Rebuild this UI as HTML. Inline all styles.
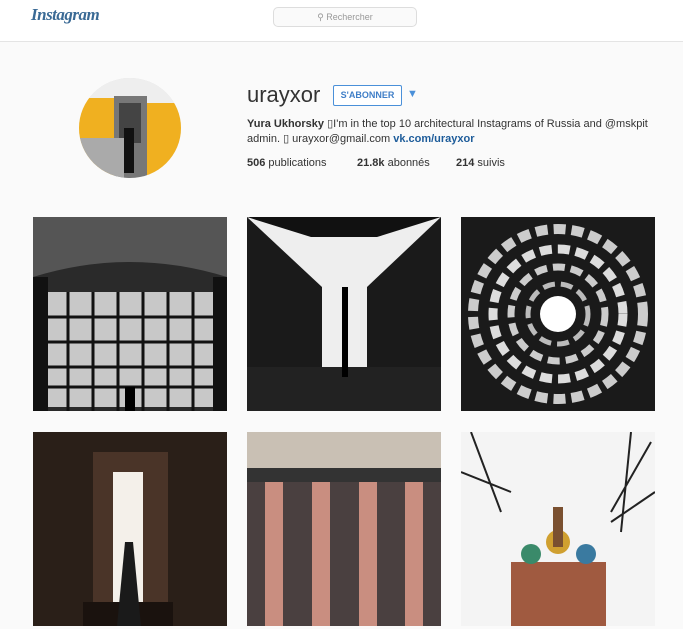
<!DOCTYPE html>
<html><head><meta charset="utf-8"><style>
body{margin:0;width:683px;height:629px;overflow:hidden;background:#fafafa;font-family:"Liberation Sans",sans-serif;position:relative}
.hdr{position:absolute;left:0;top:0;width:683px;height:41px;background:#fff;border-bottom:1px solid #e4e4e4}
.logo{position:absolute;left:31px;top:5px;font-family:"Liberation Serif",serif;font-style:italic;font-weight:bold;font-size:17px;color:#3a6a95;letter-spacing:-0.5px}
.search{position:absolute;left:273px;top:7px;width:142px;height:18px;border:1px solid #ddd;border-radius:5px;background:#fafafa;font-size:9px;color:#999;text-align:center;line-height:18px}
.av{position:absolute;left:79px;top:78px;width:102px;height:100px;border-radius:50%;overflow:hidden;background:#ddd}
.name{position:absolute;left:247px;top:82px;font-size:22px;color:#333;font-weight:300}
.btn{position:absolute;left:333px;top:85px;width:67px;height:19px;border:1px solid #4a90d9;border-radius:2px;font-size:9px;color:#3f7ec7;font-weight:bold;text-align:center;line-height:19px;background:#fff}
.arr{position:absolute;left:407px;top:88px;font-size:11px;color:#4a90d9}
.bio{position:absolute;left:247px;top:117px;font-size:11px;color:#333;line-height:15px;width:420px}
.bio b{color:#333}.bio a{color:#1d5c9a;font-weight:bold;text-decoration:none}
.stats{position:absolute;top:157px;font-size:11px;color:#333}
.ph{position:absolute;width:194px;height:194px;overflow:hidden}
</style></head><body>
<div class="hdr"><div class="logo">Instagram</div><div class="search">&#9906; Rechercher</div></div>
<div class="av"><svg width="102" height="100"><rect width="102" height="100" fill="#eee"/><rect x="0" y="20" width="35" height="80" fill="#f0b020"/><rect x="68" y="25" width="34" height="75" fill="#f0b020"/><rect x="35" y="18" width="33" height="82" fill="#777"/><rect x="40" y="25" width="22" height="40" fill="#444"/><rect x="0" y="60" width="45" height="40" fill="#aaa"/><rect x="45" y="50" width="10" height="45" fill="#111"/></svg></div>
<div class="name">urayxor</div><div class="btn">S'ABONNER</div><div class="arr">▼</div>
<div class="bio"><b>Yura Ukhorsky</b> ▯I'm in the top 10 architectural Instagrams of Russia and @mskpit admin. ▯ urayxor@gmail.com <a>vk.com/urayxor</a></div>
<div class="stats" style="left:247px"><b>506</b> publications</div>
<div class="stats" style="left:357px"><b>21.8k</b> abonnés</div>
<div class="stats" style="left:456px"><b>214</b> suivis</div>

<div class="ph" style="left:33px;top:217px"><svg width="194" height="194"><rect width="194" height="194" fill="#2a2a2a"/><path d="M0 0H194V60Q97 30 0 60Z" fill="#555"/><rect x="15" y="75" width="165" height="115" fill="#c8c8c8"/><g stroke="#111" stroke-width="3"><path d="M15 100H180M15 125H180M15 150H180M15 170H180M35 75V194M60 75V194M85 75V194M110 75V194M135 75V194M160 75V194"/></g><rect x="0" y="60" width="15" height="134" fill="#111"/><rect x="180" y="60" width="14" height="134" fill="#111"/><rect x="92" y="170" width="10" height="24" fill="#000"/></svg></div>
<div class="ph" style="left:247px;top:217px"><svg width="194" height="194"><rect width="194" height="194" fill="#eee"/><path d="M0 0L75 70V194H0Z" fill="#1a1a1a"/><path d="M194 0L120 70V194H194Z" fill="#1a1a1a"/><path d="M0 0H194L130 20H64Z" fill="#111"/><rect x="0" y="150" width="194" height="44" fill="#222"/><rect x="95" y="70" width="6" height="90" fill="#000"/></svg></div>
<div class="ph" style="left:461px;top:217px"><svg width="194" height="194"><rect width="194" height="194" fill="#1a1a1a"/><g fill="none" stroke-dasharray="12 6"><circle cx="97" cy="97" r="85" stroke="#ccc" stroke-width="10"/><circle cx="97" cy="97" r="65" stroke="#ddd" stroke-width="9"/><circle cx="97" cy="97" r="47" stroke="#ccc" stroke-width="7"/><circle cx="97" cy="97" r="30" stroke="#bbb" stroke-width="5"/></g><circle cx="97" cy="97" r="18" fill="#fff"/></svg></div>
<div class="ph" style="left:33px;top:432px"><svg width="194" height="194"><rect width="194" height="194" fill="#2a1f18"/><rect x="60" y="20" width="75" height="174" fill="#4a3428"/><rect x="80" y="40" width="30" height="130" fill="#f4f0ea"/><rect x="50" y="170" width="90" height="24" fill="#1a120e"/><path d="M92 110L100 110L108 194H84Z" fill="#1a1a1a"/></svg></div>
<div class="ph" style="left:247px;top:432px"><svg width="194" height="194"><rect width="194" height="194" fill="#4a4040"/><rect width="194" height="40" fill="#c9c0b4"/><g fill="#c98e80"><rect x="18" y="48" width="18" height="146"/><rect x="65" y="48" width="18" height="146"/><rect x="112" y="48" width="18" height="146"/><rect x="158" y="48" width="18" height="146"/></g><rect x="0" y="36" width="194" height="14" fill="#333"/></svg></div>
<div class="ph" style="left:461px;top:432px"><svg width="194" height="194"><rect width="194" height="194" fill="#f4f4f4"/><g stroke="#222" stroke-width="2" fill="none"><path d="M10 0L40 80M0 40L50 60M190 10L150 80M194 60L150 90M170 0L160 100"/></g><rect x="50" y="130" width="95" height="64" fill="#a05a40"/><circle cx="70" cy="122" r="10" fill="#3a8a6a"/><circle cx="97" cy="110" r="12" fill="#d0a030"/><circle cx="125" cy="122" r="10" fill="#3a7aa0"/><rect x="92" y="75" width="10" height="40" fill="#7a5030"/></svg></div>
</body></html>
